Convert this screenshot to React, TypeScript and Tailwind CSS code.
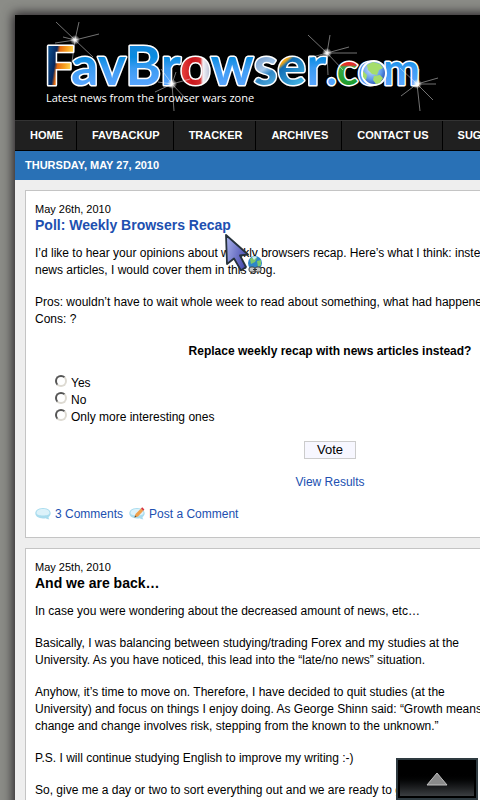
import React from "react";
import { clsx } from "clsx";

const NAV = ["HOME", "FAVBACKUP", "TRACKER", "ARCHIVES", "CONTACT US", "SUGGEST NEWS"];

const OPTIONS = ["Yes", "No", "Only more interesting ones"];

// x and y are the star centre, rays run out from it
const SPARKLES = [
  { x: 60, y: 25, rays: "M0 0L-19 -18 M0 0L4 -18 M0 0L24 -6 M0 0L18 17 M0 0L-3 22 M0 0L-20 3 M0 0L-12 -3" },
  { x: 157, y: 69, rays: "M0 0L-11 -15 M0 0L4 -12 M0 0L18 -5 M0 0L15 16 M0 0L2 27 M0 0L-17 8 M0 0L-14 -2" },
  { x: 312, y: 38, rays: "M0 0L-19 -18 M0 0L3 -18 M0 0L22 -6 M0 0L16 17 M0 0L1 22 M0 0L-18 5 M0 0L30 0" },
  { x: 402, y: 69, rays: "M0 0L-17 -16 M0 0L2 -15 M0 0L21 -6 M0 0L16 16 M0 0L3 27 M0 0L-16 12 M0 0L19 0" },
];

function Logo() {
  return (
    <svg width="430" height="105" viewBox="0 0 430 105" role="img" aria-label="FavBrowser.com" className="block">
      <defs>
        <linearGradient id="blue" gradientUnits="userSpaceOnUse" x1="0" y1="26" x2="0" y2="71">
          <stop offset="0" stopColor="#1b84d8" />
          <stop offset="0.35" stopColor="#078be0" />
          <stop offset="0.6" stopColor="#3a9bf2" />
          <stop offset="1" stopColor="#5aa6ff" />
        </linearGradient>
        <linearGradient id="fox" gradientUnits="userSpaceOnUse" x1="33" y1="42" x2="58" y2="46">
          <stop offset="0" stopColor="#0b4a88" />
          <stop offset="0.3" stopColor="#06275e" />
          <stop offset="0.42" stopColor="#e56a10" />
          <stop offset="0.7" stopColor="#f9a11f" />
          <stop offset="1" stopColor="#ffe05a" />
        </linearGradient>
        <linearGradient id="red" gradientUnits="userSpaceOnUse" x1="167" y1="0" x2="195" y2="0">
          <stop offset="0" stopColor="#e8433f" />
          <stop offset="0.35" stopColor="#c9161c" />
          <stop offset="0.65" stopColor="#d32a2c" />
          <stop offset="0.75" stopColor="#f4f4f8" />
          <stop offset="1" stopColor="#b9bfd4" />
        </linearGradient>
        <linearGradient id="flock" gradientUnits="userSpaceOnUse" x1="238" y1="36" x2="262" y2="71">
          <stop offset="0" stopColor="#5c86bd" />
          <stop offset="0.5" stopColor="#a4c6e8" />
          <stop offset="0.65" stopColor="#2f86c4" />
          <stop offset="1" stopColor="#56b4e4" />
        </linearGradient>
        <linearGradient id="ie" gradientUnits="userSpaceOnUse" x1="263" y1="40" x2="290" y2="71">
          <stop offset="0" stopColor="#ffc22e" />
          <stop offset="0.22" stopColor="#f2a715" />
          <stop offset="0.3" stopColor="#0f6cb4" />
          <stop offset="1" stopColor="#4fc0ea" />
        </linearGradient>
        <linearGradient id="chrome" gradientUnits="userSpaceOnUse" x1="0" y1="42" x2="0" y2="71">
          <stop offset="0" stopColor="#dc1f1c" />
          <stop offset="0.28" stopColor="#e2332c" />
          <stop offset="0.34" stopColor="#3faa45" />
          <stop offset="1" stopColor="#189a2c" />
        </linearGradient>
        <radialGradient id="earth" cx="0.4" cy="0.35" r="0.7">
          <stop offset="0" stopColor="#cfe6ff" />
          <stop offset="0.6" stopColor="#5f9ae8" />
          <stop offset="1" stopColor="#1c3fa8" />
        </radialGradient>
        <radialGradient id="glow">
          <stop offset="0" stopColor="#ffffff" />
          <stop offset="0.3" stopColor="#ffffff" stopOpacity="0.8" />
          <stop offset="1" stopColor="#ffffff" stopOpacity="0" />
        </radialGradient>
      </defs>
      <text x="29" y="70" fontSize="54" fontWeight="700" stroke="#ffffff" strokeWidth="3" strokeLinejoin="round" paintOrder="stroke" fill="url(#blue)" className="font-['Lato',sans-serif]">
        <tspan fill="url(#fox)">F</tspan>avBr<tspan fill="url(#red)">o</tspan>w<tspan fill="url(#flock)">s</tspan><tspan fill="url(#ie)">e</tspan>r
        <tspan fontSize="44">.<tspan fill="url(#chrome)">c</tspan>om</tspan>
      </text>
      <circle cx="359" cy="58" r="12" fill="url(#earth)" stroke="#ffffff" strokeWidth="2" />
      <path d="M352 50l6-3 7 2 3 4-4 2-2 5-5-1-4-4zM359 61l6-1 3 3-3 5-4 1-3-4zM348 56l4 4-1 5-3-3z" fill="#a5dd6c" />
      {SPARKLES.map((s) => (
        <g key={s.x} transform={`translate(${s.x} ${s.y})`}>
          <path d={s.rays} stroke="#ffffff" strokeOpacity="0.45" strokeWidth="1" />
          <circle r="5" fill="url(#glow)" />
        </g>
      ))}
      <text x="31" y="87" fontSize="11" fill="#ffffff" className="font-['Open_Sans',sans-serif]">
        Latest news from the browser wars zone
      </text>
    </svg>
  );
}

function Bubble({ pencil = false }: { pencil?: boolean }) {
  return (
    <svg width="16" height="16" viewBox="0 0 16 16" aria-hidden="true" className="shrink-0">
      <path d="M8 2C3.500 2 .3 4.200 .3 7.300s3.200 5.200 7.700 5.200c1 0 2-.1 2.800-.3 1 .8 2.400 1.300 3.700 1.100-.8-.7-1-1.500-.9-2.300 1.300-1 2.100-2.200 2.100-3.700C15.700 4.200 12.500 2 8 2z" fill="#a9dcee" />
      <path d="M8 3c-3.700 0-6.500 1.500-6.500 3.800S4.500 9.500 8 9.500s6.500-.4 6.500-2.700S11.700 3 8 3z" fill="#dcf2fa" />
      {pencil && (
        <>
          <path d="M5.500 11.500l1-3.500L12 2.500l2.300 2.200L9 10.500z" fill="#f0a04a" />
          <path d="M5.500 11.500l.6-2 1.400 1.300z" fill="#5a4632" />
          <path d="M12 2.500l1.200-1.200 2.200 2.200-1.100 1.200z" fill="#d8323c" />
        </>
      )}
    </svg>
  );
}

function Pointer() {
  return (
    <svg width="40" height="42" viewBox="0 0 40 42" aria-hidden="true" className="pointer-events-none absolute left-[198px] top-[42px]">
      <defs>
        <linearGradient id="arrow" x1="0" y1="0" x2="1" y2="0.4">
          <stop offset="0" stopColor="#aab4ec" />
          <stop offset="1" stopColor="#4b4fb0" />
        </linearGradient>
      </defs>
      <path d="M2 2L24 21.500 16 22.500 22 34 17 37.500 10 25.500 3 31z" fill="url(#arrow)" stroke="#26323c" strokeWidth="1.800" strokeLinejoin="round" />
      <circle cx="31" cy="30" r="7" fill="#2e86c8" />
      <path d="M26 26l4-3 3 2-2 4-4 2zM33 28l4-1v5l-3 2z" fill="#7cc76a" />
      <path d="M28 24c2-1 4-1 5 0l-3 3z" fill="#c9e9fb" />
      <rect x="25" y="34" width="6" height="5" rx="2" fill="#c8c8c8" stroke="#444444" />
      <rect x="31" y="34" width="6" height="5" rx="2" fill="#c8c8c8" stroke="#444444" />
      <path d="M29 36.500h4" stroke="#333333" />
    </svg>
  );
}

function Post({ date, title, link = false, children }: { date: string; title: string; link?: boolean; children: React.ReactNode }) {
  return (
    <article className="relative w-[610px] border border-[#c4c4c4] bg-white px-[9px] pt-[11px] pb-[14px]">
      <p className="text-[11px] leading-[14px]">{date}</p>
      <h2 className={clsx("mb-[11px] text-[14px] leading-[18px] font-bold", link && "text-[#204fb0]")}>
        {link ? <a href="#poll">{title}</a> : title}
      </h2>
      <div className="flex flex-col gap-[15px]">{children}</div>
    </article>
  );
}

export default function App() {
  return (
    <div className="min-h-screen overflow-x-hidden bg-[#8b8c87] pt-[15px] pl-[15px] font-['Liberation_Sans',Arial,sans-serif] text-[12px] leading-[17px] text-black">
      <div className="min-w-[920px] bg-[#eeeeee] shadow-[0_0_10px_2px_#262226]">
        <header className="h-[105px] bg-black">
          <Logo />
        </header>

        <nav className="flex border-t border-b border-t-[#333333] border-b-black bg-[#202020] text-[11px] leading-[29px] font-bold text-white">
          {NAV.map((item) => (
            <a key={item} href="#nav" className="border-r border-black pr-[13px] pl-[15px]">
              {item}
            </a>
          ))}
        </nav>

        <div className="bg-[#2971b6] px-[10px] text-[11px] leading-[29px] font-bold text-white">THURSDAY, MAY 27, 2010</div>

        <main className="flex flex-col gap-[10px] p-[10px]">
          <Post date="May 26th, 2010" title="Poll: Weekly Browsers Recap" link>
            <p>
              I’d like to hear your opinions about weekly browsers recap. Here’s what I think: instead of<br />
              news articles, I would cover them in this blog.
            </p>
            <p>
              Pros: wouldn’t have to wait whole week to read about something, what had happened.
              <br />
              Cons: ?
            </p>
            <form className="flex flex-col items-center gap-[15px]" onSubmit={(e) => e.preventDefault()}>
              <p className="font-bold">Replace weekly recap with news articles instead?</p>
              <div className="flex flex-col self-stretch pl-[20px]">
                {OPTIONS.map((option) => (
                  <label key={option} className="flex gap-[4px]">
                    <input
                      type="radio"
                      name="poll"
                      className="size-[12px] appearance-none rounded-full border-2 border-t-[#555555] border-r-[#dddad2] border-b-[#dddad2] border-l-[#555555] bg-white checked:bg-black"
                    />
                    {option}
                  </label>
                ))}
              </div>
              <button type="submit" className="border border-[#cccccc] bg-[#f7f7ff] px-[12px] text-[13px] leading-[16px]">
                Vote
              </button>
              <a href="#results" className="text-[#204fb0]">
                View Results
              </a>
            </form>
            <div className="flex gap-[6px] text-[#204fb0]">
              <a href="#comments" className="flex gap-[4px]">
                <Bubble />3 Comments
              </a>
              <a href="#respond" className="flex gap-[4px]">
                <Bubble pencil />
                Post a Comment
              </a>
            </div>
            <Pointer />
          </Post>

          <Post date="May 25th, 2010" title="And we are back…">
            <p>In case you were wondering about the decreased amount of news, etc…</p>
            <p>
              Basically, I was balancing between studying/trading Forex and my studies at the
              <br />
              University. As you have noticed, this lead into the “late/no news” situation.
            </p>
            <p>
              Anyhow, it’s time to move on. Therefore, I have decided to quit studies (at the
              <br />
              University) and focus on things I enjoy doing. As George Shinn said: “Growth means
              <br />
              change and change involves risk, stepping from the known to the unknown.”
            </p>
            <p>P.S. I will continue studying English to improve my writing :-)</p>
            <p>So, give me a day or two to sort everything out and we are ready to go.</p>
          </Post>
        </main>
      </div>

      {/* Back to top */}
      <button
        type="button"
        aria-label="Back to top"
        className="fixed right-[2px] bottom-0 flex h-[42px] w-[82px] items-center justify-center border-2 border-[#2e3a40] bg-black p-[2px]"
      >
        <span className="flex size-full items-center justify-center bg-linear-to-b from-black from-30% to-[#3c3f42]">
          <svg width="22" height="14" viewBox="0 0 22 14">
            <path d="M11 1L21 13H1z" fill="#8a8a8a" stroke="#c0c0c0" />
          </svg>
        </span>
      </button>
    </div>
  );
}
